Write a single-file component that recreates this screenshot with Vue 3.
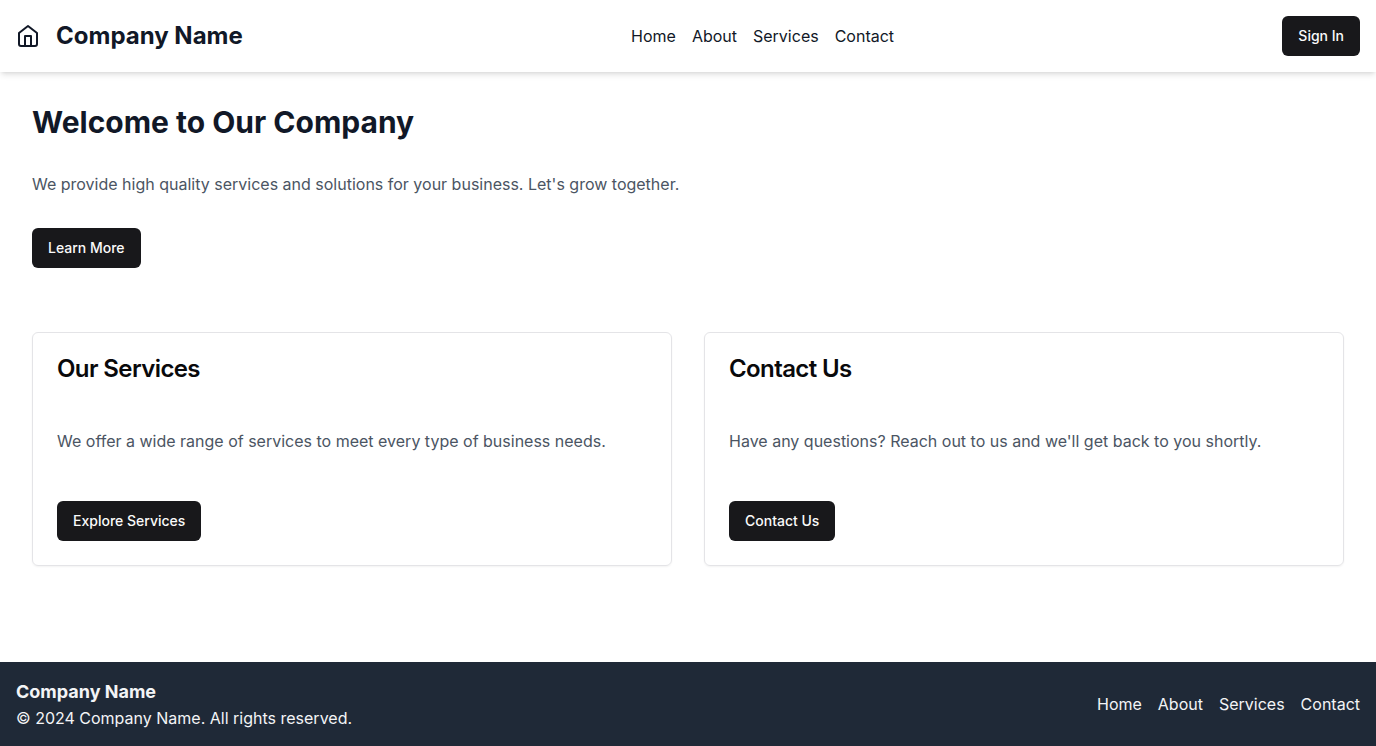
<script setup>
const links = ['Home', 'About', 'Services', 'Contact']
const cards = [
  {
    title: 'Our Services',
    text: 'We offer a wide range of services to meet every type of business needs.',
    action: 'Explore Services',
  },
  {
    title: 'Contact Us',
    text: "Have any questions? Reach out to us and we'll get back to you shortly.",
    action: 'Contact Us',
  },
]
</script>

<template>
  <div class="page">
    <header class="header">
      <div class="brand">
        <svg class="logo" viewBox="0 0 24 24" fill="none" stroke="currentColor" stroke-width="2" stroke-linecap="round" stroke-linejoin="round" aria-hidden="true">
          <path d="m3 9 9-7 9 7v11a2 2 0 0 1-2 2H5a2 2 0 0 1-2-2z" />
          <polyline points="9 22 9 12 15 12 15 22" />
        </svg>
        <span class="brand-name">Company Name</span>
      </div>
      <nav class="nav" aria-label="Main">
        <a v-for="link in links" :key="link" href="#">{{ link }}</a>
      </nav>
      <button class="button" type="button">Sign In</button>
    </header>

    <main class="main">
      <section class="hero">
        <h1>Welcome to Our Company</h1>
        <p>We provide high quality services and solutions for your business. Let's grow together.</p>
        <button class="button" type="button">Learn More</button>
      </section>
      <section class="cards">
        <article v-for="card in cards" :key="card.title" class="card">
          <h2>{{ card.title }}</h2>
          <p>{{ card.text }}</p>
          <button class="button" type="button">{{ card.action }}</button>
        </article>
      </section>
    </main>

    <footer class="footer">
      <div>
        <h3>Company Name</h3>
        <p>© 2024 Company Name. All rights reserved.</p>
      </div>
      <nav class="nav" aria-label="Footer">
        <a v-for="link in links" :key="link" href="#">{{ link }}</a>
      </nav>
    </footer>
  </div>
</template>

<style>
body {
  margin: 0;
  background: #fff;
}
</style>

<style scoped>
.page {
  display: flex;
  flex-direction: column;
  min-height: 100vh;
  font-family: Inter, "Liberation Sans", sans-serif;
  font-size: 16px;
  line-height: 24px;
  color: #111827;
}
h1, h2, h3, p {
  margin: 0;
}
.header {
  display: flex;
  align-items: center;
  justify-content: space-between;
  padding: 16px;
  background: #fff;
  box-shadow: 0 4px 6px -1px rgba(0, 0, 0, 0.1), 0 2px 4px -2px rgba(0, 0, 0, 0.1);
}
.brand {
  display: flex;
  align-items: center;
  gap: 16px;
}
.logo {
  width: 24px;
  height: 24px;
}
.brand-name {
  font-size: 24px;
  line-height: 32px;
  font-weight: 700;
}
.nav {
  display: flex;
  gap: 16px;
}
.nav a {
  color: inherit;
  text-decoration: none;
}
.button {
  height: 40px;
  padding: 8px 16px;
  border: 0;
  border-radius: 6px;
  background: #18181b;
  color: #fafafa;
  font-family: inherit;
  font-size: 14px;
  line-height: 20px;
  font-weight: 500;
  cursor: pointer;
}
.main {
  flex: 1;
  padding: 32px;
}
.hero {
  display: flex;
  flex-direction: column;
  align-items: flex-start;
  gap: 32px;
  margin-bottom: 64px;
}
.hero h1 {
  font-size: 30px;
  line-height: 36px;
  font-weight: 700;
}
.hero p, .card p {
  color: #4b5563;
}
.cards {
  display: grid;
  grid-template-columns: repeat(2, 1fr);
  gap: 32px;
}
.card {
  display: flex;
  flex-direction: column;
  align-items: flex-start;
  gap: 48px;
  padding: 24px;
  border: 1px solid #e4e4e7;
  border-radius: 6px;
  color: #09090b;
  box-shadow: 0 1px 2px rgba(0, 0, 0, 0.05);
}
.card h2 {
  font-size: 24px;
  line-height: 24px;
  font-weight: 600;
  letter-spacing: -0.025em;
}
.footer {
  display: flex;
  align-items: center;
  justify-content: space-between;
  padding: 16px;
  background: #1f2937;
  color: #f3f4f6;
}
.footer h3 {
  font-size: 18px;
  line-height: 28px;
  font-weight: 700;
}
</style>
